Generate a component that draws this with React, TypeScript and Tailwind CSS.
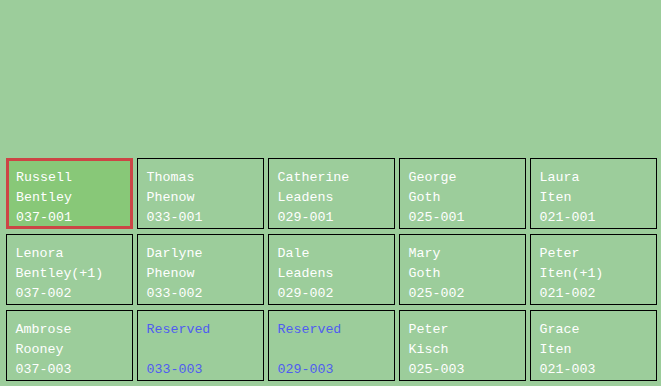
import React from "react";

type Slot = {
  first: string;
  last: string;
  code: string;
  reserved?: boolean;
  selected?: boolean;
};

const slots: Slot[] = [
  { first: "Russell", last: "Bentley", code: "037-001", selected: true },
  { first: "Thomas", last: "Phenow", code: "033-001" },
  { first: "Catherine", last: "Leadens", code: "029-001" },
  { first: "George", last: "Goth", code: "025-001" },
  { first: "Laura", last: "Iten", code: "021-001" },
  { first: "Lenora", last: "Bentley(+1)", code: "037-002" },
  { first: "Darlyne", last: "Phenow", code: "033-002" },
  { first: "Dale", last: "Leadens", code: "029-002" },
  { first: "Mary", last: "Goth", code: "025-002" },
  { first: "Peter", last: "Iten(+1)", code: "021-002" },
  { first: "Ambrose", last: "Rooney", code: "037-003" },
  { first: "Reserved", last: "", code: "033-003", reserved: true },
  { first: "Reserved", last: "", code: "029-003", reserved: true },
  { first: "Peter", last: "Kisch", code: "025-003" },
  { first: "Grace", last: "Iten", code: "021-003" },
];

function SlotCard({ slot }: { slot: Slot }): React.ReactElement {
  const frame = slot.selected
    ? "border-[3px] border-[#cc4545] bg-[#88c878] pl-[7px] pt-[7px]"
    : "border-[1.5px] border-black bg-[#9ccd9b] pl-[8.5px] pt-[8.5px]";
  const tone = slot.reserved ? "text-[#4f5cf0]" : "text-white";
  return (
    <div className={`w-[127px] h-[71px] flex flex-col leading-[20px] ${frame} ${tone}`}>
      <span>{slot.first}</span>
      <span className="h-[20px]">{slot.last}</span>
      <span>{slot.code}</span>
    </div>
  );
}

export default function App(): React.ReactElement {
  return (
    <div
      className="w-[661px] h-[386px] bg-[#9ccd9b] pt-[158px] pl-[6px] text-[13.3px] overflow-hidden"
      style={{ fontFamily: '"Liberation Mono", monospace' }}
    >
      <div className="grid grid-cols-[repeat(5,127px)] gap-x-[4px] gap-y-[5px]">
        {slots.map((slot, idx) => (
          <SlotCard key={idx} slot={slot} />
        ))}
      </div>
    </div>
  );
}
